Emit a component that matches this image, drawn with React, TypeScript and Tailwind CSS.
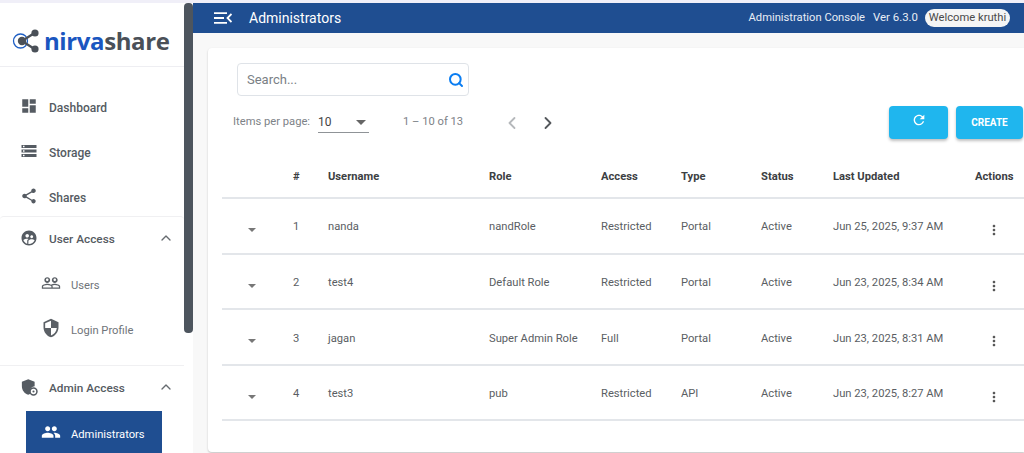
import { ChevronUp, ChevronLeft, ChevronRight, Search } from "lucide-react";

const paths = {
  dashboard: "M3 13h8V3H3v10zm0 8h8v-6H3v6zm10 0h8V11h-8v10zm0-18v6h8V3h-8z",
  storage: "M2 20h20v-4H2v4zm2-3h2v2H4v-2zM2 4v4h20V4H2zm4 3H4V5h2v2zm-4 7h20v-4H2v4zm2-3h2v2H4v-2z",
  share: "M18 16.08c-.76 0-1.44.3-1.96.77L8.91 12.7c.05-.23.09-.46.09-.7s-.04-.47-.09-.7l7.05-4.11c.54.5 1.25.81 2.04.81 1.66 0 3-1.34 3-3s-1.34-3-3-3-3 1.34-3 3c0 .24.04.47.09.7L8.04 9.81C7.5 9.31 6.79 9 6 9c-1.66 0-3 1.34-3 3s1.34 3 3 3c.79 0 1.5-.31 2.04-.81l7.12 4.16c-.05.21-.08.43-.08.65 0 1.61 1.31 2.92 2.92 2.92 1.61 0 2.92-1.31 2.92-2.92s-1.31-2.92-2.92-2.92z",
  userCircle: "M12 2C6.47 2 2 6.47 2 12s4.47 10 10 10 10-4.47 10-10S17.53 2 12 2zm3.61 6.34c1.07 0 1.93.86 1.93 1.93 0 1.07-.86 1.93-1.93 1.93-1.07 0-1.93-.86-1.93-1.93-.01-1.07.86-1.93 1.93-1.93zm-6-1.58c1.3 0 2.36 1.06 2.36 2.36 0 1.3-1.06 2.36-2.36 2.36s-2.36-1.06-2.36-2.36c0-1.31 1.05-2.36 2.36-2.36zm0 9.13v3.75c-2.4-.75-4.3-2.6-5.14-4.96 1.05-1.12 3.67-1.69 5.14-1.69.53 0 1.2.08 1.9.22-1.64.87-1.9 2.02-1.9 2.68zM11.99 20c-.27 0-.53-.01-.79-.04v-4.07c0-1.42 2.94-2.13 4.4-2.13 1.07 0 2.92.39 3.84 1.15-1.17 2.97-4.06 5.09-7.45 5.09z",
  peopleOutline: "M16.5 13c-1.2 0-3.07.34-4.5 1-1.43-.67-3.3-1-4.5-1C5.33 13 1 14.08 1 16.25V19h22v-2.75c0-2.17-4.33-3.25-6.5-3.25zm-4 4.5h-10v-1.25c0-.54 2.56-1.75 5-1.75s5 1.21 5 1.75v1.25zm9 0H14v-1.25c0-.46-.2-.86-.52-1.22.88-.3 1.96-.53 3.02-.53 2.44 0 5 1.21 5 1.75v1.25zM7.5 12c1.93 0 3.5-1.57 3.5-3.5S9.43 5 7.5 5 4 6.57 4 8.5 5.57 12 7.5 12zm0-5.5c.83 0 1.5.67 1.5 1.5s-.67 1.5-1.5 1.5S6 8.83 6 8s.67-1.5 1.5-1.5zm9 5.5c1.93 0 3.5-1.57 3.5-3.5S18.43 5 16.5 5 13 6.57 13 8.5s1.57 3.5 3.5 3.5zm0-5.5c.83 0 1.5.67 1.5 1.5s-.67 1.5-1.5 1.5S15 8.83 15 8s.67-1.5 1.5-1.5z",
  people: "M16 11c1.66 0 2.99-1.34 2.99-3S17.66 5 16 5c-1.66 0-3 1.34-3 3s1.34 3 3 3zm-8 0c1.66 0 2.99-1.34 2.99-3S9.66 5 8 5C6.34 5 5 6.34 5 8s1.34 3 3 3zm0 2c-2.33 0-7 1.17-7 3.5V19h14v-2.5c0-2.33-4.67-3.5-7-3.5zm8 0c-.29 0-.62.02-.97.05 1.16.84 1.97 1.97 1.97 3.45V19h6v-2.5c0-2.33-4.67-3.5-7-3.5z",
  security: "M12 1L3 5v6c0 5.55 3.84 10.74 9 12 5.16-1.26 9-6.45 9-12V5l-9-4zm0 10.99h7c-.53 4.12-3.28 7.79-7 8.94V12H5V6.3l7-3.11v8.8z",
  refresh: "M17.65 6.35C16.2 4.9 14.21 4 12 4c-4.42 0-7.99 3.58-7.99 8s3.57 8 7.99 8c3.73 0 6.84-2.55 7.73-6h-2.08c-.82 2.33-3.04 4-5.65 4-3.31 0-6-2.69-6-6s2.69-6 6-6c1.66 0 3.14.69 4.22 1.78L13 11h7V4l-2.35 2.35z",
  moreVert: "M12 8c1.1 0 2-.9 2-2s-.9-2-2-2-2 .9-2 2 .9 2 2 2zm0 2c-1.1 0-2 .9-2 2s.9 2 2 2 2-.9 2-2-.9-2-2-2zm0 6c-1.1 0-2 .9-2 2s.9 2 2 2 2-.9 2-2-.9-2-2-2z",
};

function Icon({ d, className }: { d: string; className: string }) {
  return (
    <svg viewBox="0 0 24 24" fill="currentColor" className={className}>
      <path d={d} />
    </svg>
  );
}

function AdminShield({ className }: { className: string }) {
  return (
    <svg viewBox="0 0 24 24" className={className}>
      <path fill="currentColor" d="M11 1.5L2.5 5v6c0 5.2 3.6 10 8.5 11.3 1-.3 2-.7 2.8-1.3A7 7 0 0 1 19.5 11V5L11 1.5z" />
      <circle cx="18" cy="18" r="4.6" fill="none" stroke="currentColor" strokeWidth="2" />
      <circle cx="18" cy="18" r="1.4" fill="currentColor" />
    </svg>
  );
}

function LogoMark() {
  return (
    <svg viewBox="0 0 28 26" className="w-[28px] h-[26px]">
      <circle cx="8.5" cy="13" r="7" fill="none" stroke="#1f5fc4" strokeWidth="1.3" />
      <path d="M10 13L22.5 5M10 13l12.5 8" stroke="#4a5058" strokeWidth="2.4" fill="none" />
      <circle cx="10" cy="13" r="4.2" fill="#4a5058" />
      <circle cx="23" cy="5" r="3.6" fill="#4a5058" />
      <circle cx="23" cy="21" r="3.6" fill="#4a5058" />
    </svg>
  );
}

function NavItem({ d, label }: { d: string; label: string }) {
  return (
    <div className="h-[45px] flex items-center pl-[20px] text-[#555b62]">
      <Icon d={d} className="w-[18px] h-[18px] -mt-[3px]" />
      <span className="ml-[11px] text-[12px] font-medium">{label}</span>
    </div>
  );
}

function SubItem({ d, label }: { d: string; label: string }) {
  return (
    <div className="h-[45px] flex items-center pl-[41px] text-[#6f747a]">
      <Icon d={d} className="w-[20px] h-[20px] -mt-[3px] text-[#5b6066]" />
      <span className="ml-[10px] mt-[4px] text-[11.2px]">{label}</span>
    </div>
  );
}

function GroupHeader({ icon, label }: { icon: React.ReactNode; label: string }) {
  return (
    <div className="h-[45px] flex items-center pl-[20px] pr-[10px] text-[#555b62]">
      {icon}
      <span className="ml-[11px] mt-px text-[11.8px] font-medium flex-1">{label}</span>
      <ChevronUp className="w-[16px] h-[16px] -mt-[3px] text-[#666b70]" strokeWidth={2} />
    </div>
  );
}

const rowGrid = "grid grid-cols-[71px_35px_161px_112px_80px_80px_72px_142px_1fr] items-center";

const admins = [
  { id: 1, username: "nanda", role: "nandRole", access: "Restricted", type: "Portal", updated: "Jun 25, 2025, 9:37 AM" },
  { id: 2, username: "test4", role: "Default Role", access: "Restricted", type: "Portal", updated: "Jun 23, 2025, 8:34 AM" },
  { id: 3, username: "jagan", role: "Super Admin Role", access: "Full", type: "Portal", updated: "Jun 23, 2025, 8:31 AM" },
  { id: 4, username: "test3", role: "pub", access: "Restricted", type: "API", updated: "Jun 23, 2025, 8:27 AM" },
];

const headers = ["#", "Username", "Role", "Access", "Type", "Status", "Last Updated", "Actions"];

export default function App() {
  return (
    <div className="w-[1024px] h-[453px] overflow-hidden bg-white font-['Roboto',sans-serif] flex flex-col">
      <div className="h-[3px] shrink-0 bg-[#f0eff8]" />
      <div className="flex flex-1 min-h-0">
        {/* Sidebar */}
        <aside className="w-[184px] shrink-0 bg-white overflow-hidden">
          <div className="h-[64px] flex items-center pl-[12px] pt-[13px] border-b border-[#eeeef2]">
            <LogoMark />
            <span className="ml-[4px] font-['Open_Sans',sans-serif] font-bold text-[24px] leading-none tracking-[-0.4px]">
              <span className="text-[#1a56c0]">nirva</span>
              <span className="text-[#4a5058]">share</span>
            </span>
          </div>
          <div className="h-[149px] pt-[18px]">
            <NavItem d={paths.dashboard} label="Dashboard" />
            <NavItem d={paths.storage} label="Storage" />
            <NavItem d={paths.share} label="Shares" />
          </div>
          <div className="h-[149px] border-t border-[#f0f0f2] rounded-t">
            <GroupHeader icon={<Icon d={paths.userCircle} className="w-[18px] h-[18px] -mt-[3px]" />} label="User Access" />
            <SubItem d={paths.peopleOutline} label="Users" />
            <SubItem d={paths.security} label="Login Profile" />
          </div>
          <div className="border-t border-[#f0f0f2]">
            <GroupHeader icon={<AdminShield className="w-[18px] h-[18px] -mt-[3px]" />} label="Admin Access" />
            <div className="ml-[26px] w-[136px] h-[45px] bg-[#1f4e91] flex items-center pl-[15px] text-white">
              <Icon d={paths.people} className="w-[20px] h-[20px] -mt-[3px]" />
              <span className="ml-[10px] mt-[4px] text-[11.2px]">Administrators</span>
            </div>
          </div>
        </aside>

        {/* Scrollbar */}
        <div className="w-[9px] shrink-0 bg-white">
          <div className="h-[330px] bg-[#4d555e] rounded-[4px]" />
        </div>

        {/* Main */}
        <main className="flex-1 min-w-0 flex flex-col">
          <header className="h-[30px] shrink-0 bg-[#1f4e91] flex items-center text-white pl-[21px] pr-[14px]">
            <svg viewBox="0 0 18 12" className="w-[18px] h-[12px]" fill="none" stroke="currentColor" strokeWidth="1.8">
              <path d="M0 1.2h13M0 6h10M0 10.8h13M17.5 2L13.5 6l4 4" />
            </svg>
            <span className="ml-[17px] text-[14px] flex-1">Administrators</span>
            <span className="text-[11.2px] text-[#e8edf5]">Administration Console</span>
            <span className="ml-[8px] text-[11.4px] text-[#e8edf5]">Ver 6.3.0</span>
            <span className="ml-[7px] h-[18px] w-[85px] rounded-full bg-[#f5f5f5] text-[#4a4a4a] text-[11.2px] flex items-center justify-center whitespace-nowrap">
              Welcome kruthi
            </span>
          </header>

          <div className="flex-1 min-h-0 bg-[#f8f8f8] pl-[15px] pt-[15px] pb-px">
            <div className="h-full bg-white rounded-l-[4px] shadow-[0_1px_2px_rgba(0,0,0,0.22)] pt-[15px]">
              <div className="ml-[29px] w-[232px] h-[33px] border border-[#dfe3e8] rounded-[4px] flex items-center pl-[9px] pr-[4px]">
                <span className="flex-1 text-[13px] text-[#7a7f85]">Search...</span>
                <Search className="w-[16px] h-[16px] text-[#0a7df2]" strokeWidth={3} />
              </div>

              <div className="mt-[10px] h-[33px] flex items-center pl-[25px] pr-px">
                <span className="text-[11.2px] text-[#7d8287] w-[85px] whitespace-nowrap">Items per page:</span>
                <div className="w-[51px] h-[21px] border-b border-[#8f9397] flex items-center justify-between pr-[3px] text-[12px] text-[#444]">
                  <span>10</span>
                  <span className="w-0 h-0 border-x-[5px] border-x-transparent border-t-[5px] border-t-[#666]" />
                </div>
                <span className="ml-[34px] text-[11.2px] text-[#7d8287] w-[61px] whitespace-nowrap">1 – 10 of 13</span>
                <ChevronLeft className="ml-[38px] w-[20px] h-[20px] text-[#b5b8bb]" strokeWidth={2.2} />
                <ChevronRight className="ml-[16px] w-[20px] h-[20px] text-[#54585c]" strokeWidth={2.2} />
                <button className="ml-auto w-[59px] h-[33px] rounded-[4px] bg-[#1fb6ee] text-white shadow-[0_2px_3px_rgba(0,0,0,0.25)] flex items-center justify-center pb-[5px]">
                  <Icon d={paths.refresh} className="w-[16px] h-[16px]" />
                </button>
                <button className="ml-[8px] w-[67px] h-[33px] rounded-[4px] bg-[#1fb6ee] text-white text-[10px] font-bold shadow-[0_2px_3px_rgba(0,0,0,0.25)]">
                  CREATE
                </button>
              </div>

              <div className="ml-[14px] mt-[15px]">
                <div className={`${rowGrid} h-[45px] pt-[3px] border-b-2 border-[#e3e6ea] text-[11.2px] font-bold text-[#3c4043]`}>
                  <span />
                  {headers.map((h) => (
                    <span key={h}>{h}</span>
                  ))}
                </div>
                {admins.map((a) => (
                  <div key={a.id} className={`${rowGrid} h-[55.6px] pt-[4px] border-b-2 border-[#e3e6ea] text-[11.2px] text-[#5a5e63]`}>
                    <span className="pl-[26px] pt-[5px]">
                      <span className="block w-0 h-0 border-x-[4px] border-x-transparent border-t-[4px] border-t-[#777]" />
                    </span>
                    <span>{a.id}</span>
                    <span>{a.username}</span>
                    <span>{a.role}</span>
                    <span>{a.access}</span>
                    <span>{a.type}</span>
                    <span>Active</span>
                    <span>{a.updated}</span>
                    <span className="pl-[11px] pt-[5px]">
                      <Icon d={paths.moreVert} className="w-[16px] h-[16px] text-[#555]" />
                    </span>
                  </div>
                ))}
              </div>
            </div>
          </div>
        </main>
      </div>
    </div>
  );
}
